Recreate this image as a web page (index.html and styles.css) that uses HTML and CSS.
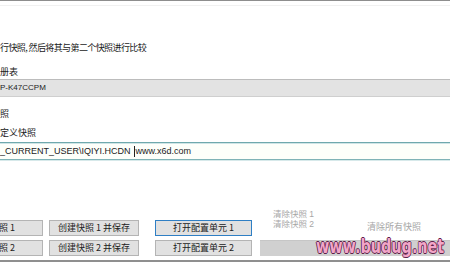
FILE: index.html
```html
<!DOCTYPE html>
<html lang="zh-CN">
<head>
<meta charset="utf-8">
<title>快照</title>
<link rel="stylesheet" href="styles.css">
</head>
<body>
<div class="page">
  <div class="topline"></div>
  <div class="topfaint"></div>
  <p class="label desc">行快照, 然后将其与第二个快照进行比较</p>
  <p class="label lbl-reg">册表</p>
  <div class="combo">P-K47CCPM</div>
  <p class="label lbl-snap">照</p>
  <p class="label lbl-custom">定义快照</p>
  <div class="input"><span class="val">_CURRENT_USER\IQIYI.HCDN</span><span class="caret"></span><span class="val">www.x6d.com</span></div>
  <div class="actions">
    <button class="btn btn-cut r1">照 1</button>
    <button class="btn r1">创建快照 1 并保存</button>
    <button class="btn btn-focus r1">打开配置单元 1</button>
    <div class="clear-col">
      <div class="clear-stack">
        <span>清除快照 1</span>
        <span>清除快照 2</span>
      </div>
      <span class="clear-all">清除所有快照</span>
    </div>
    <button class="btn btn-cut">照 2</button>
    <button class="btn">创建快照 2 并保存</button>
    <button class="btn">打开配置单元 2</button>
    <div class="disabled-bar"></div>
  </div>
  <div class="bottomline"></div>
</div>
<div class="watermark">www.budug.net</div>
</body>
</html>
```
FILE: styles.css
```css
html, body {
  margin: 0;
  padding: 0;
  background: #ffffff;
}
body {
  width: 450px;
  height: 263px;
  overflow: hidden;
  position: relative;
  font-family: "Noto Sans CJK SC", "Liberation Sans", sans-serif;
  color: #1a1a1a;
}
.page {
  display: flex;
  flex-direction: column;
  width: 450px;
}
.topline {
  height: 1px;
  background: #8e8e8e;
}
.topfaint {
  height: 4px;
  border-bottom: 1px solid #f1f1f1;
}
.label {
  margin: 0;
  font-size: 9px;
  line-height: 12px;
  height: 12px;
  white-space: nowrap;
}
.desc {
  margin-top: 36px;
  letter-spacing: -0.6px;
}
.lbl-reg {
  margin-top: 12px;
}
.combo {
  margin-top: 1px;
  height: 16px;
  line-height: 16px;
  background: #e3e3e3;
  border-top: 1px solid #bcbcbc;
  border-bottom: 1px solid #cfcfcf;
  font-family: "Liberation Sans", sans-serif;
  font-size: 8px;
  color: #222;
}
.lbl-snap {
  margin-top: 11px;
}
.lbl-custom {
  margin-top: 7px;
}
.input {
  margin-top: 3px;
  height: 16px;
  display: flex;
  align-items: center;
  background: #fdfffa;
  border-top: 1px solid #6fa9ad;
  border-bottom: 1px solid #7fb3b6;
  box-shadow: inset 0 1px 0 #cfe5e6, 0 1px 0 #d7e9ea;
  font-family: "Liberation Sans", sans-serif;
  font-size: 9px;
  color: #1a1a1a;
  white-space: nowrap;
}
.caret {
  width: 1px;
  height: 11px;
  background: #222;
  margin: 0 1px 0 3px;
}
.actions {
  margin-top: 46px;
  display: grid;
  grid-template-columns: 43px 96px 113px 1fr;
  grid-template-rows: 30px 16px;
  row-gap: 4px;
}
.btn {
  margin: 0;
  height: 16px;
  padding: 0;
  background: #e1e1e1;
  border: 1px solid #b4b4b4;
  font-family: "Noto Sans CJK SC", "Liberation Sans", sans-serif;
  font-size: 9px;
  line-height: 14px;
  color: #222;
  white-space: nowrap;
  box-sizing: border-box;
}
.btn.r1 {
  align-self: end;
}
.actions .btn:nth-child(2),
.actions .btn:nth-child(6) {
  margin-left: 6px;
}
.actions .btn:nth-child(3),
.actions .btn:nth-child(7) {
  margin-left: 16px;
}
.btn-cut {
  border-left: none;
  text-align: left;
  text-indent: -1px;
}
.btn-focus {
  border-color: #2f7fc4;
}
.clear-col {
  display: flex;
  margin-left: 8px;
  color: #a6a6a6;
}
.clear-stack {
  display: flex;
  flex-direction: column;
  padding-left: 13px;
  padding-top: 3px;
  font-family: "Liberation Sans", "Noto Sans CJK SC", sans-serif;
  font-size: 8.5px;
  line-height: 10px;
  white-space: nowrap;
}
.clear-stack span {
  height: 10px;
}
.clear-all {
  margin-left: 53px;
  margin-top: 15px;
  line-height: 12px;
  height: 12px;
  font-size: 9px;
  white-space: nowrap;
}
.disabled-bar {
  margin-left: 8px;
  background: #d0d0d0;
  border-top: 1px solid #c6c6c6;
}
.bottomline {
  margin-top: 4px;
  height: 2px;
  background: #8f8f8f;
}
.watermark {
  position: absolute;
  left: 316px;
  top: 234px;
  font-family: "DejaVu Sans", "Liberation Sans", sans-serif;
  font-weight: bold;
  font-size: 20px;
  line-height: 24px;
  color: #f2a6c8;
  transform: scaleX(0.72);
  transform-origin: left top;
  white-space: nowrap;
  text-shadow: 1px 0 0 #5c2148, -1px 0 0 #5c2148, 0 1px 0 #5c2148, 0 -1px 0 #5c2148;
}
```
